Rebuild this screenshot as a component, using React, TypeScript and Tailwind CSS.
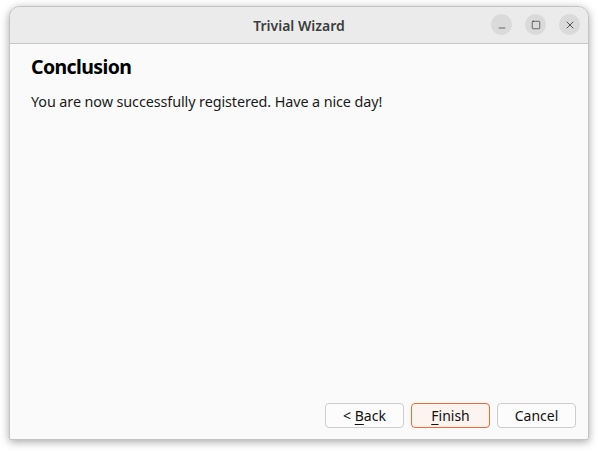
import { Minus, Square, X } from 'lucide-react';

function WindowButton({ children }: { children: React.ReactNode }) {
  return (
    <div className="w-[21px] h-[21px] rounded-full bg-[#dadada] flex items-center justify-center text-[#2e2e2e]">
      {children}
    </div>
  );
}

function DialogButton({ label, mnemonic, rest, prefix = '', accent = false }: { label?: string; mnemonic?: string; rest?: string; prefix?: string; accent?: boolean }) {
  return (
    <button
      className={`w-[79px] h-[25px] rounded-[4px] border text-[14px] text-[#111] flex items-center justify-center ${
        accent ? 'border-[#ec6a3c] bg-[#fdf4ef]' : 'border-[#cdcdcd] bg-[#fcfcfc]'
      }`}
    >
      {label ? (
        label
      ) : (
        <span>
          {prefix}
          <span className="underline underline-offset-[3px]">{mnemonic}</span>
          {rest}
        </span>
      )}
    </button>
  );
}

export default function App() {
  return (
    <div className="w-[598px] h-[453px] bg-white pl-[9px] pt-[6px]" style={{ fontFamily: '"Noto Sans", "Open Sans", sans-serif' }}>
      <div className="w-[580px] h-[434px] rounded-t-[11px] rounded-b-[2px] border border-[#c4c4c4] bg-[#fafafa] shadow-[0_2px_8px_rgba(0,0,0,0.35)] flex flex-col overflow-hidden">
        <div className="h-[37px] bg-[#ebebeb] border-b border-[#c8c8c8] flex items-center relative shrink-0">
          <div className="flex-1 text-center text-[14px] font-semibold text-[#3d3d3d] tracking-[0px]">Trivial Wizard</div>
          <div className="absolute right-[8px] top-[7px] flex gap-[13px]">
            <WindowButton>
              <Minus size={10} strokeWidth={1.6} className="mt-[6px]" />
            </WindowButton>
            <WindowButton>
              <Square size={10} strokeWidth={1.6} />
            </WindowButton>
            <WindowButton>
              <X size={12} strokeWidth={1.6} />
            </WindowButton>
          </div>
        </div>
        <div className="flex-1 flex flex-col pl-[21px] pr-[12px] pt-[8px]">
          <h1 className="text-[19.5px] font-bold text-black tracking-[-0.6px] leading-[30px]">Conclusion</h1>
          <p className="mt-[9px] text-[14.4px] text-[#1a1a1a] tracking-[-0.1px]">
            You are now successfully registered. Have a nice day!
          </p>
          <div className="flex-1" />
          <div className="flex justify-end gap-[7px] pb-[11px]">
            <DialogButton prefix="< " mnemonic="B" rest="ack" />
            <DialogButton mnemonic="F" rest="inish" accent />
            <DialogButton label="Cancel" />
          </div>
        </div>
      </div>
    </div>
  );
}
